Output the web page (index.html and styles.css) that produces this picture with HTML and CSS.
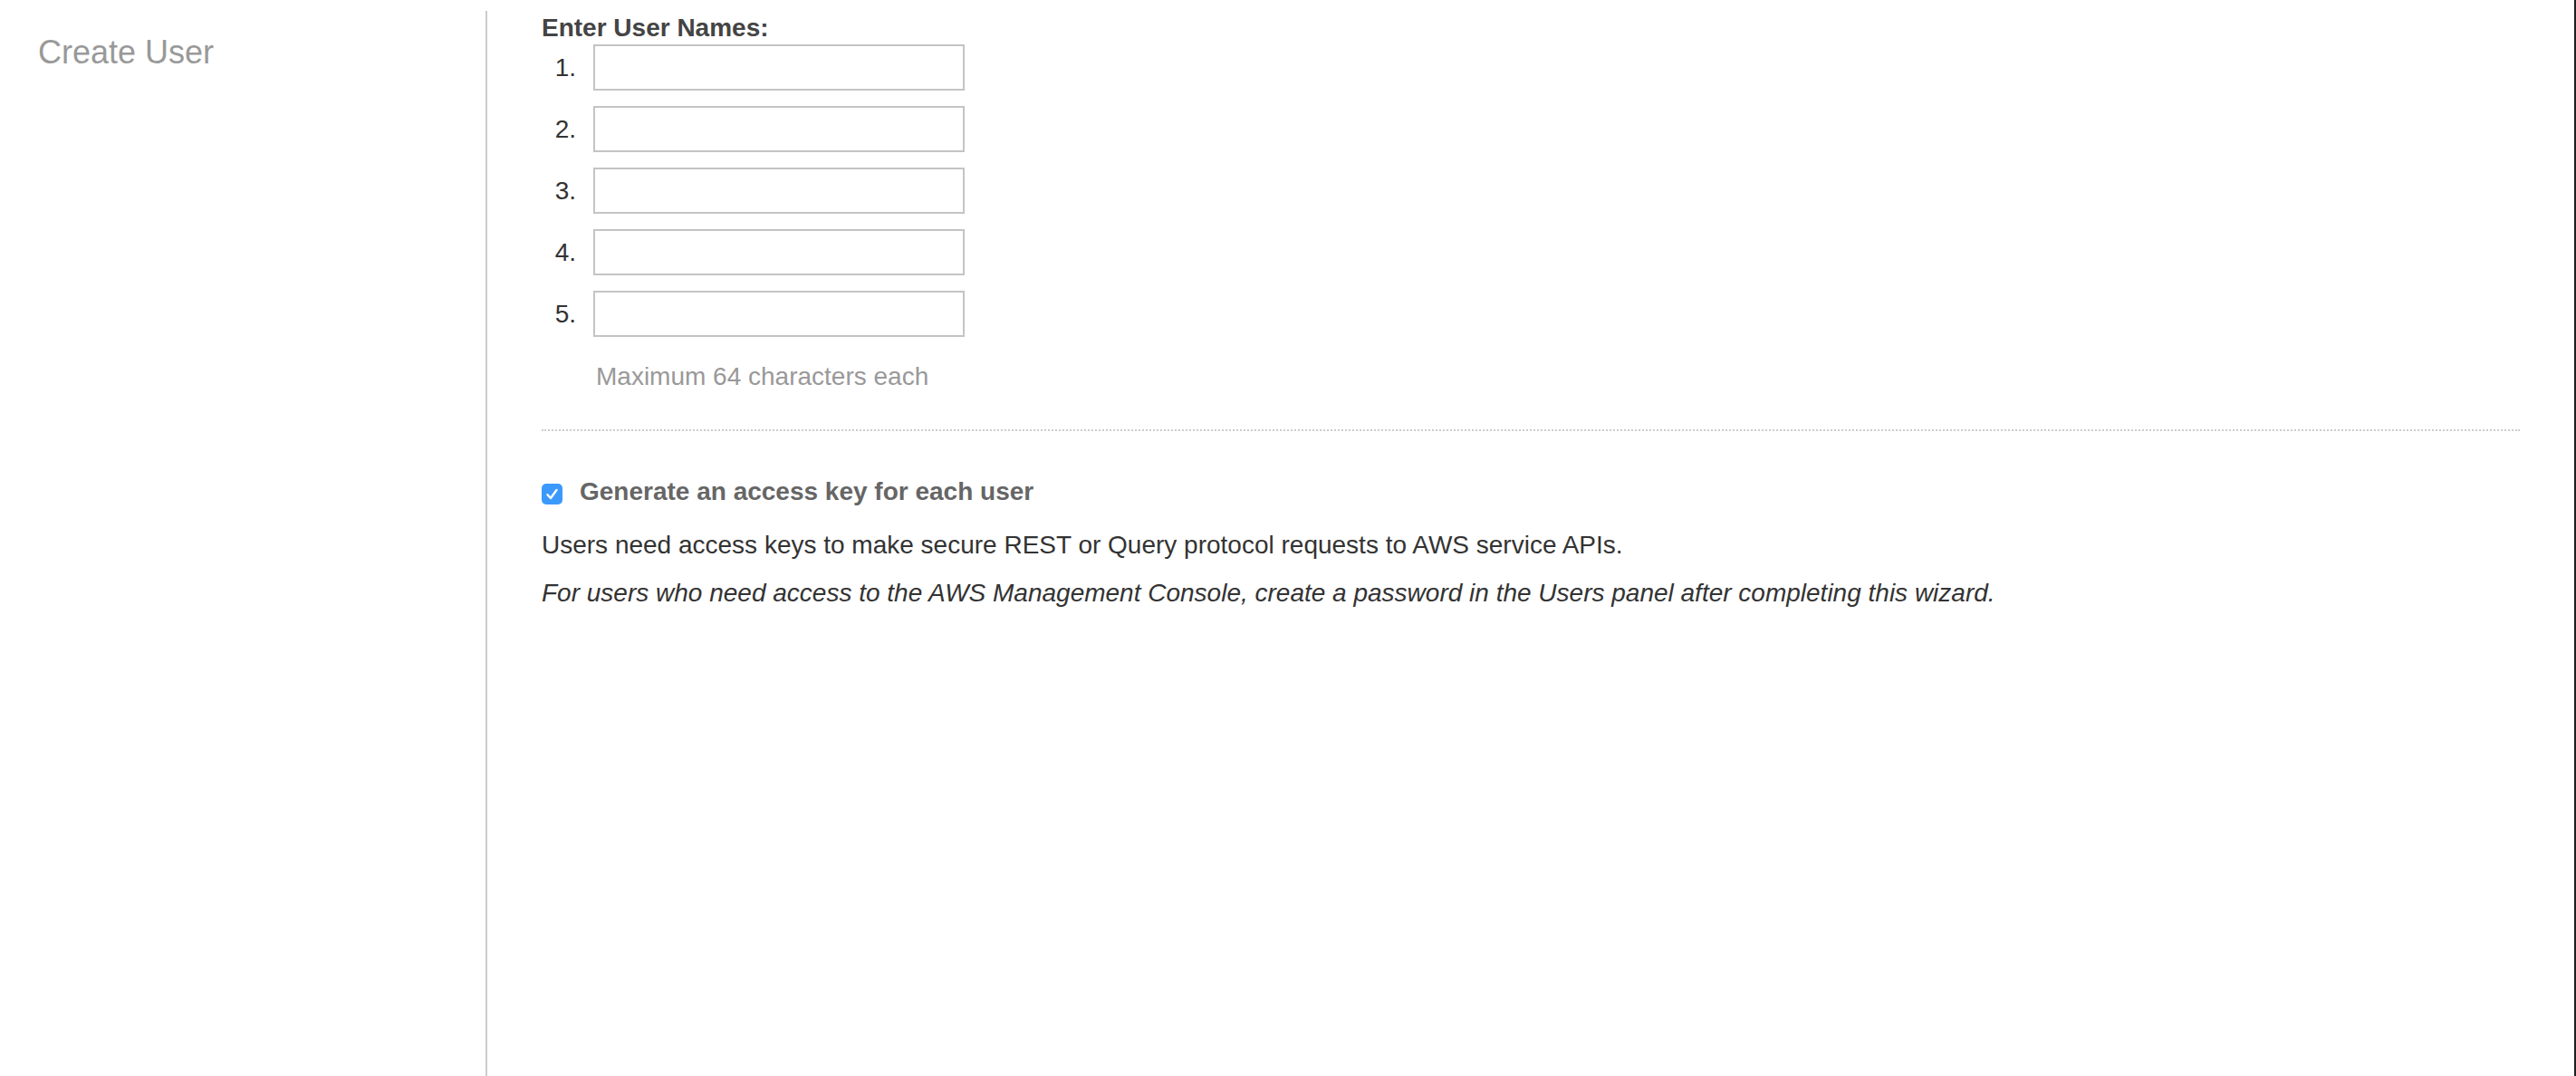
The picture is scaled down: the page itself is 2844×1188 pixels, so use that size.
FILE: index.html
```html
<!DOCTYPE html>
<html>
<head>
<meta charset="utf-8">
<title>Create User</title>
<link rel="stylesheet" href="styles.css">
</head>
<body>
<div class="page">
  <aside class="side">
    <h1 class="side-title">Create User</h1>
  </aside>
  <main class="main">
    <div class="names">
      <div class="names-title">Enter User Names:</div>
      <div class="rows">
        <div class="row"><span class="num">1.</span><input class="box" type="text"></div>
        <div class="row"><span class="num">2.</span><input class="box" type="text"></div>
        <div class="row"><span class="num">3.</span><input class="box" type="text"></div>
        <div class="row"><span class="num">4.</span><input class="box" type="text"></div>
        <div class="row"><span class="num">5.</span><input class="box" type="text"></div>
      </div>
      <div class="hint">Maximum 64 characters each</div>
    </div>
    <hr class="sep">
    <div class="check-row">
      <span class="check">
        <svg viewBox="0 0 23 23" width="23" height="23"><path d="M6.5 12.2 L10 16 L16.5 7" fill="none" stroke="#fff" stroke-width="2.4" stroke-linecap="round" stroke-linejoin="round"/></svg>
      </span>
      <span class="check-label">Generate an access key for each user</span>
    </div>
    <p class="para">Users need access keys to make secure REST or Query protocol requests to AWS service APIs.</p>
    <p class="para italic">For users who need access to the AWS Management Console, create a password in the Users panel after completing this wizard.</p>
  </main>
</div>
</body>
</html>
```

FILE: styles.css
```css
html, body {
  margin: 0;
  padding: 0;
  background: #fff;
}
body {
  font-family: "Liberation Sans", Arial, Helvetica, sans-serif;
  color: #333;
}
.page {
  display: flex;
  min-height: 1188px;
  border-right: 2px solid #1f1f1f;
  box-sizing: border-box;
}
.side {
  width: 536px;
  flex: 0 0 536px;
  padding: 37px 0 0 42px;
  box-sizing: border-box;
}
.side-title {
  margin: 0;
  font-size: 36px;
  line-height: 42px;
  font-weight: normal;
  color: #999;
}
.main {
  flex: 1;
  margin-top: 12px;
  border-left: 2px solid #ccc;
  padding: 0 60px 0 60px;
}
.names-title {
  margin-top: 2px;
  font-size: 28px;
  font-weight: bold;
  line-height: 34px;
  color: #444;
}
.rows {
  display: flex;
  flex-direction: column;
  gap: 17px;
  margin-top: 1px;
}
.row {
  display: flex;
  align-items: center;
  gap: 19px;
}
.num {
  width: 38px;
  text-align: right;
  font-size: 28px;
  line-height: 34px;
  color: #333;
}
.box {
  width: 410px;
  height: 51px;
  box-sizing: border-box;
  border: 2px solid #c4c4c4;
  border-radius: 0;
  margin: 0;
  padding: 0 8px;
  background: #fff;
  font-size: 26px;
}
.hint {
  margin-top: 27px;
  padding-left: 60px;
  font-size: 28px;
  line-height: 34px;
  color: #999;
}
.sep {
  margin: 41px 0 0 0;
  border: 0;
  border-top: 2px dotted #ccc;
  height: 0;
}
.check-row {
  display: flex;
  align-items: center;
  gap: 19px;
  margin-top: 50px;
  height: 34px;
}
.check {
  width: 23px;
  height: 23px;
  border-radius: 5px;
  background: #3b99fc;
  display: flex;
  margin-top: 5px;
}
.check svg {
  display: block;
}
.check-label {
  font-size: 28px;
  font-weight: bold;
  line-height: 34px;
  color: #666;
}
.para {
  margin: 25px 0 0 0;
  font-size: 28px;
  line-height: 34px;
  color: #333;
}
.para.italic {
  margin-top: 19px;
  font-style: italic;
}
```
